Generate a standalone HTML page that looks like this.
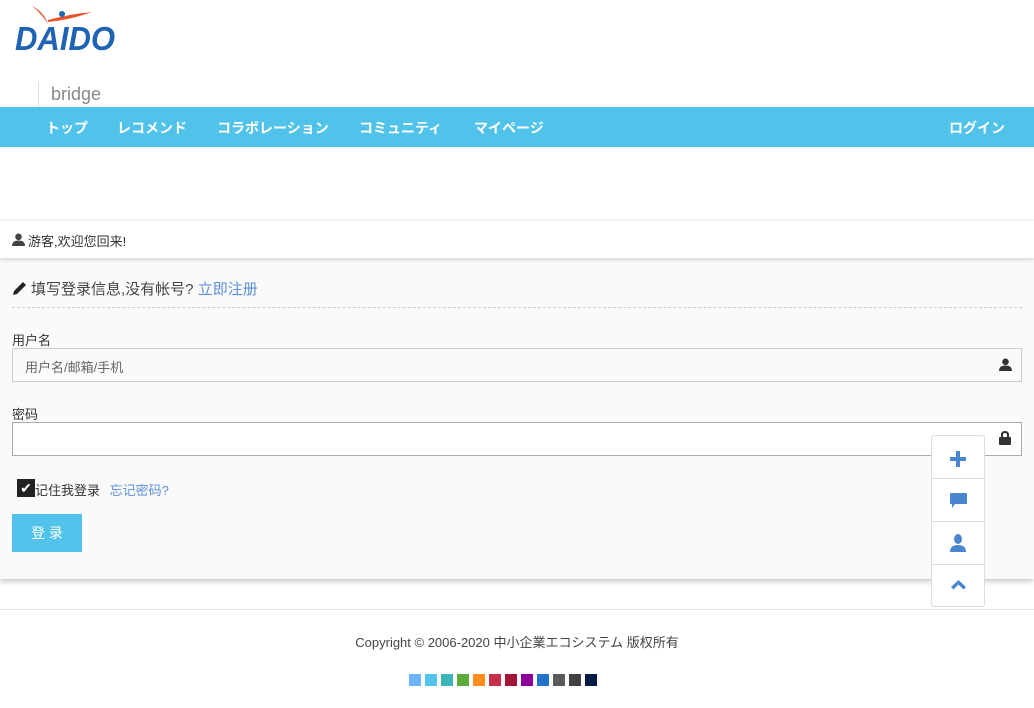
<!DOCTYPE html>
<html><head><meta charset="utf-8"><style>
*{box-sizing:border-box;margin:0;padding:0}
body{width:1034px;height:708px;background:#fff;font-family:"Liberation Sans","Noto Sans CJK SC",sans-serif;color:#333;position:relative;overflow:hidden;font-size:13px}
.abs{position:absolute}
.nav{top:107px;left:0;width:1034px;height:40px;background:#51c3ea;color:#fff;font-weight:bold;font-size:14px}
.nav span{position:absolute;top:11px}
.panel{top:221px;left:0;width:1034px;height:358px;background:#fafafa;box-shadow:0 2px 6px rgba(0,0,0,.25)}
.inp{position:absolute;left:12px;width:1010px;height:34px;border:1px solid #ccc;background:#fafafa}
</style></head><body>
<svg class="abs" style="left:12px;top:2px" width="110" height="52" viewBox="0 0 110 52">
<path d="M20 4 Q32 10 36 22 Q30 12 20 4Z" fill="#e8542a"/>
<path d="M36 18 Q58 12 80 10 Q58 18 36 20Z" fill="#e8542a"/>
<circle cx="50" cy="12" r="3" fill="#1e63b4"/>
<text x="3" y="48" font-family="Liberation Sans" font-style="italic" font-weight="bold" font-size="33" fill="#1e63b4" textLength="100" lengthAdjust="spacingAndGlyphs">DAIDO</text>
</svg>
<div class="abs" style="left:38px;top:82px;width:1px;height:25px;background:#ddd"></div>
<div class="abs" style="left:51px;top:84px;font-size:18px;color:#888">bridge</div>
<div class="abs nav"><span style="left:46px">トップ</span><span style="left:117px">レコメンド</span><span style="left:217px">コラボレーション</span><span style="left:359px">コミュニティ</span><span style="left:474px">マイページ</span><span style="left:949px">ログイン</span></div>
<div class="abs panel">
<div class="abs" style="left:0;top:0;width:1034px;height:37px;background:#fff;box-shadow:0 2px 4px rgba(0,0,0,.15)"></div>
<svg class="abs" style="left:12px;top:12px" width="13" height="13" viewBox="0 0 13 13"><circle cx="6.5" cy="3.8" r="3.3" fill="#444"/><path d="M0 13 Q0 7.5 6.5 7.5 Q13 7.5 13 13Z" fill="#444"/></svg>
<div class="abs" style="left:28px;top:10px;font-size:13px">游客,欢迎您回来!</div>
<svg class="abs" style="left:12px;top:59px" width="16" height="16" viewBox="0 0 16 16"><path d="M1 15 L2 11 L11 2 L14 5 L5 14Z" fill="#222"/></svg>
<div class="abs" style="left:31px;top:57px;font-size:15px;color:#444">填写登录信息,没有帐号? <span style="color:#5b8fd6">立即注册</span></div>
<div class="abs" style="left:12px;top:86px;width:1010px;border-top:1px dashed #ccc"></div>
<div class="abs" style="left:12px;top:109px">用户名</div>
<div class="inp" style="top:127px"><span style="position:absolute;left:12px;top:8px;color:#666">用户名/邮箱/手机</span>
<svg style="position:absolute;right:9px;top:9px" width="13" height="13" viewBox="0 0 13 13"><circle cx="6.5" cy="3.8" r="3.3" fill="#333"/><path d="M0 13 Q0 7.5 6.5 7.5 Q13 7.5 13 13Z" fill="#333"/></svg></div>
<div class="abs" style="left:12px;top:183px">密码</div>
<div class="inp" style="top:201px;background:#fff;border-color:#aaa">
<svg style="position:absolute;right:10px;top:8px" width="12" height="14" viewBox="0 0 12 14"><path d="M3 6 V4 Q3 1 6 1 Q9 1 9 4 V6" stroke="#333" stroke-width="2" fill="none"/><rect x="0" y="6" width="12" height="8" rx="1" fill="#333"/></svg></div>
<div class="abs" style="left:17px;top:258px;width:18px;height:18px;background:#222;color:#fff;font-size:14px;text-align:center;line-height:18px">✔</div>
<div class="abs" style="left:35px;top:259px">记住我登录 <span style="color:#5b8fd6;margin-left:6px">忘记密码?</span></div>
<div class="abs" style="left:12px;top:293px;width:70px;height:38px;background:#51c3ea;color:#fff;font-size:14px;text-align:center;line-height:38px">登 录</div>
</div>
<div class="abs" style="left:931px;top:435px;width:54px;height:172px;background:#fff;border:1px solid #ddd;border-radius:3px">
<div style="height:43px;border-bottom:1px solid #ddd;position:relative"><svg style="position:absolute;left:18px;top:15px" width="16" height="16" viewBox="0 0 16 16"><path d="M6 0h4v6h6v4h-6v6h-4v-6h-6v-4h6z" fill="#4a86cf"/></svg></div>
<div style="height:43px;border-bottom:1px solid #ddd;position:relative"><svg style="position:absolute;left:18px;top:14px" width="17" height="16" viewBox="0 0 17 16"><path d="M1 0h15a1 1 0 0 1 1 1v9a1 1 0 0 1-1 1h-11l-3 4v-4h-1a1 1 0 0 1-1-1v-9a1 1 0 0 1 1-1z" fill="#4a86cf"/></svg></div>
<div style="height:43px;border-bottom:1px solid #ddd;position:relative"><svg style="position:absolute;left:18px;top:12px" width="16" height="18" viewBox="0 0 16 18"><ellipse cx="8" cy="5" rx="4" ry="5" fill="#4a86cf"/><path d="M0 18 Q0 11 8 11 Q16 11 16 18Z" fill="#4a86cf"/></svg></div>
<div style="height:42px;position:relative"><svg style="position:absolute;left:19px;top:15px" width="15" height="10" viewBox="0 0 15 10"><path d="M0 7 L7.5 0 L15 7 L12.5 9.5 L7.5 4.5 L2.5 9.5Z" fill="#4a86cf"/></svg></div>
</div>
<div class="abs" style="left:0;top:609px;width:1034px;border-top:1px solid #e5e5e5"></div>
<div class="abs" style="left:0;top:632px;width:1034px;text-align:center;color:#444">Copyright © 2006-2020 中小企業エコシステム 版权所有</div>
<div class="abs" style="left:409px;top:674px;display:flex;gap:4px">
<i style="width:12px;height:12px;background:#6cb4f8"></i><i style="width:12px;height:12px;background:#51c3ea"></i><i style="width:12px;height:12px;background:#3bb5b5"></i><i style="width:12px;height:12px;background:#5dab3a"></i><i style="width:12px;height:12px;background:#fc8f21"></i><i style="width:12px;height:12px;background:#c82f4a"></i><i style="width:12px;height:12px;background:#a11538"></i><i style="width:12px;height:12px;background:#8a009a"></i><i style="width:12px;height:12px;background:#2474c9"></i><i style="width:12px;height:12px;background:#5a5a5a"></i><i style="width:12px;height:12px;background:#424242"></i><i style="width:12px;height:12px;background:#051a42"></i>
</div>
</body></html>
